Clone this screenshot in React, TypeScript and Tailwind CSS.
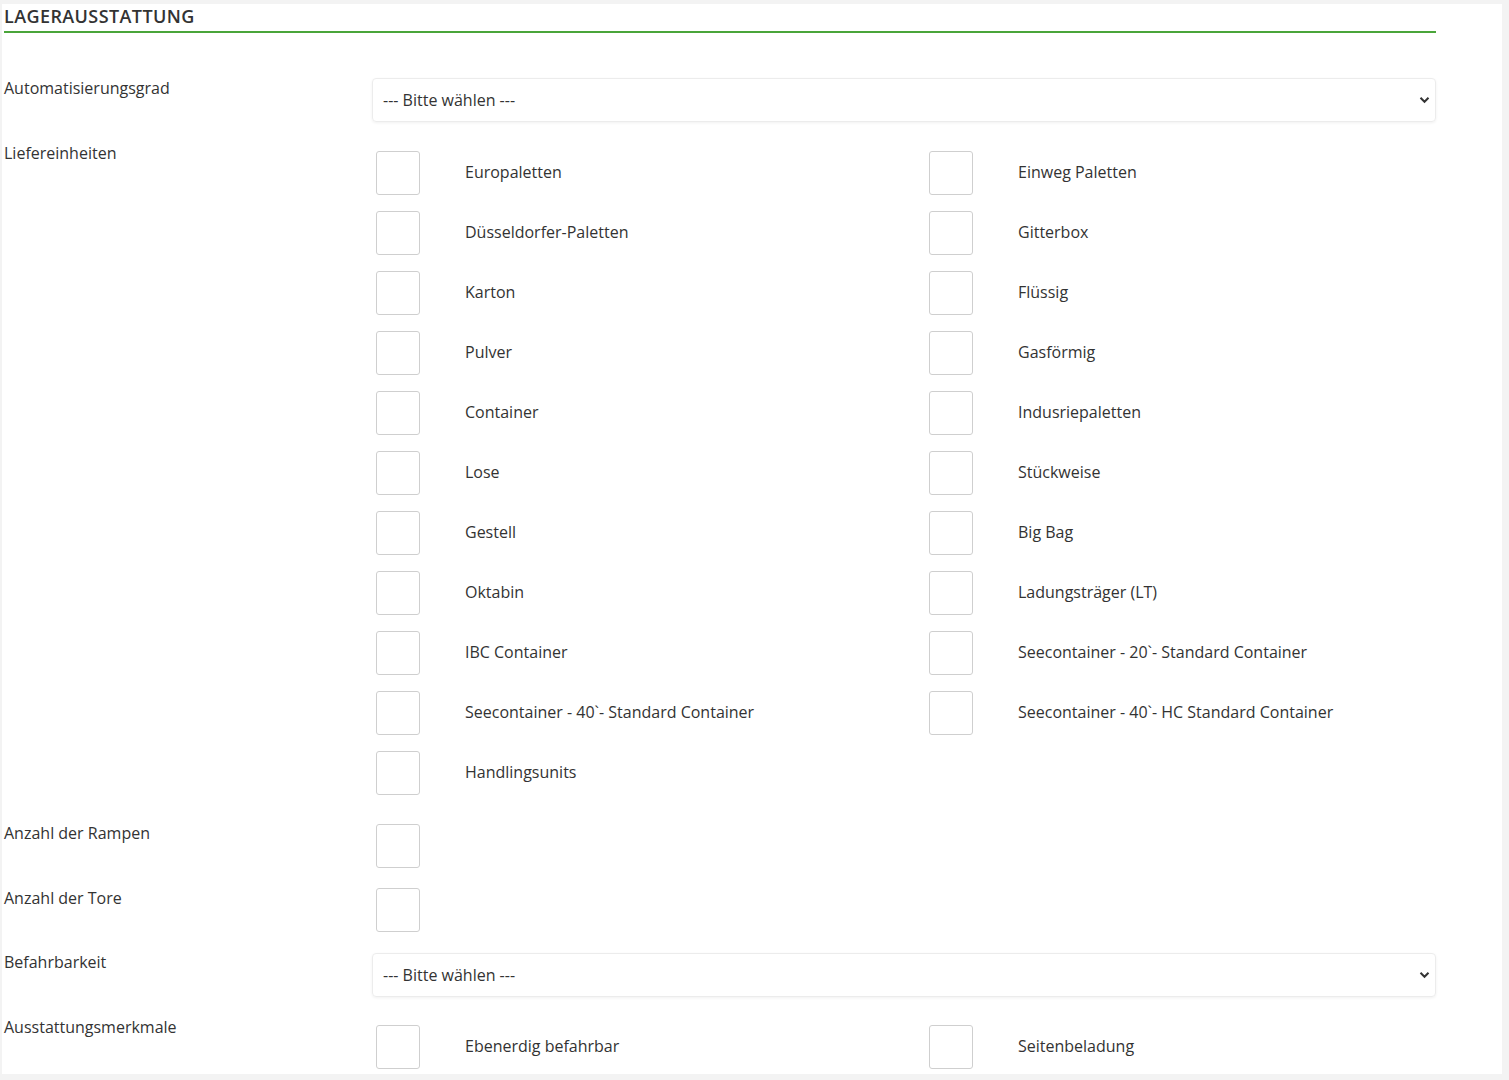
import React from 'react';

const units: [string, string | null][] = [
  ['Europaletten', 'Einweg Paletten'],
  ['Düsseldorfer-Paletten', 'Gitterbox'],
  ['Karton', 'Flüssig'],
  ['Pulver', 'Gasförmig'],
  ['Container', 'Indusriepaletten'],
  ['Lose', 'Stückweise'],
  ['Gestell', 'Big Bag'],
  ['Oktabin', 'Ladungsträger (LT)'],
  ['IBC Container', 'Seecontainer - 20`- Standard Container'],
  ['Seecontainer - 40`- Standard Container', 'Seecontainer - 40`- HC Standard Container'],
  ['Handlingsunits', null],
];

const Box = () => (
  <span className="block w-[44px] h-[44px] shrink-0 border border-[#cfcfcf] rounded-[3px] bg-white ml-[4px]" />
);

const Check = ({ label }: { label: string }) => (
  <div className="flex items-center w-[553px] h-[60px]">
    <Box />
    <span className="ml-[45px] text-[16px] leading-[22px] text-[#333] -mt-[3px]">{label}</span>
  </div>
);

const Select = () => (
  <div className="flex items-center justify-between h-[44px] w-[1064px] border border-[#ececec] rounded-[4px] shadow-[0_1px_3px_rgba(0,0,0,0.06)] pl-[10px] pr-[5px] text-[16px] text-[#333]">
    <span className="-mt-[1px]">--- Bitte wählen ---</span>
    <svg width="11" height="8" viewBox="0 0 11 8" fill="none">
      <path d="M1.5 1.8 L5.5 5.8 L9.5 1.8" stroke="#333" strokeWidth="2" />
    </svg>
  </div>
);

const Label = ({ children }: { children: React.ReactNode }) => (
  <div className="w-[368px] shrink-0 text-[16px] leading-[22px] text-[#333] -mt-[1px]">{children}</div>
);

const Row = ({ label, children }: { label: string; children: React.ReactNode }) => (
  <div className="flex">
    <Label>{label}</Label>
    <div>{children}</div>
  </div>
);

export default function App() {
  return (
    <div className="min-h-screen bg-[#f3f3f3] pt-[4px] pl-[2px]" style={{ fontFamily: '"Open Sans", "Noto Sans", sans-serif' }}>
      <div className="w-[1500px] h-[1070px] bg-white pl-[2px] overflow-hidden">
        <div className="w-[1432px]">
          <h2 className="text-[18px] font-semibold text-[#333] leading-[24px] pb-[3px] border-b-2 border-[#4aa53a] uppercase tracking-[0.4px]">
            Lagerausstattung
          </h2>
          <div className="flex flex-col gap-[20px] mt-[45px]">
            <Row label="Automatisierungsgrad">
              <Select />
            </Row>
            <div className="flex mt-[1px]">
              <Label>Liefereinheiten</Label>
              <div className="flex flex-col">
                {units.map(([a, b]) => (
                  <div key={a} className="flex">
                    <Check label={a} />
                    {b && <Check label={b} />}
                  </div>
                ))}
              </div>
            </div>
            <Row label="Anzahl der Rampen">
              <div className="pt-[1px]"><Box /></div>
            </Row>
            <Row label="Anzahl der Tore">
              <Box />
            </Row>
            <Row label="Befahrbarkeit">
              <div className="pt-[1px]"><Select /></div>
            </Row>
            <div className="flex">
              <Label>Ausstattungsmerkmale</Label>
              <div className="flex">
                <Check label="Ebenerdig befahrbar" />
                <Check label="Seitenbeladung" />
              </div>
            </div>
          </div>
        </div>
      </div>
    </div>
  );
}
